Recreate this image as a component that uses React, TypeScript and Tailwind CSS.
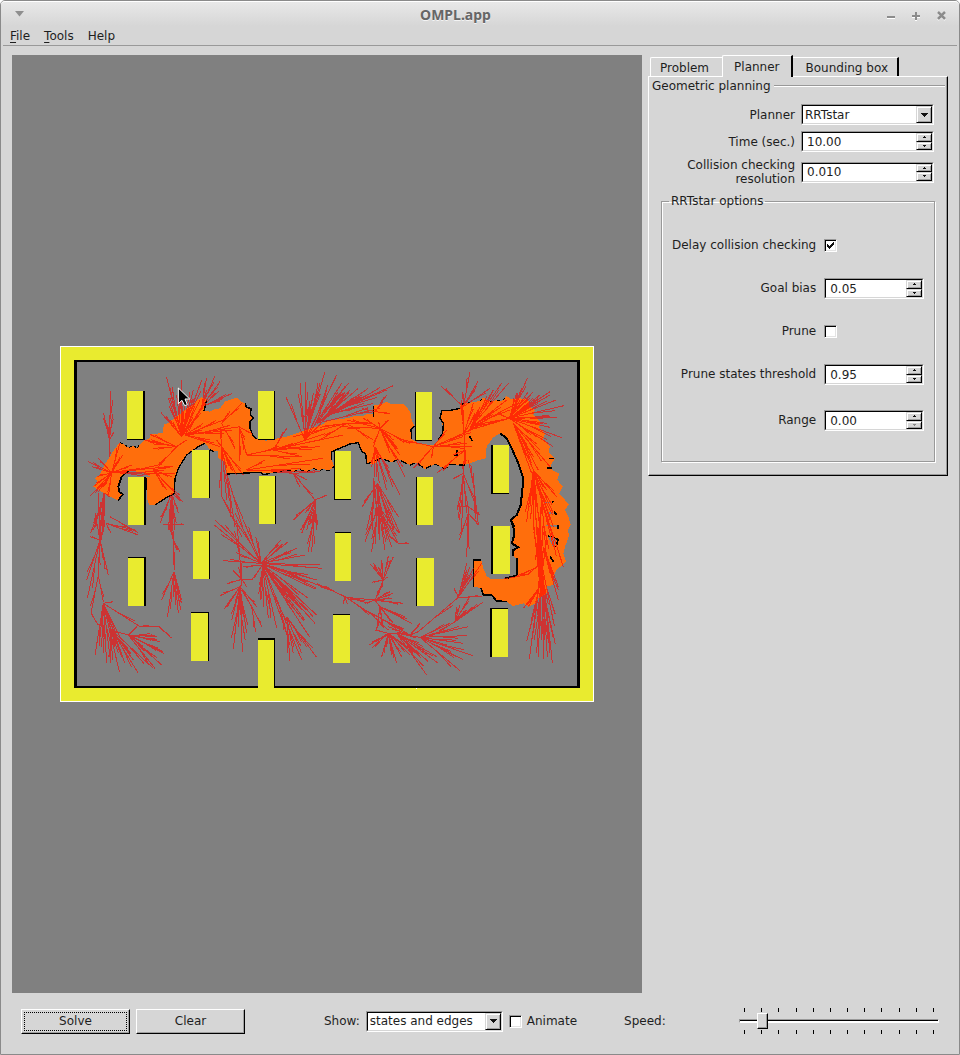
import React, { useId, useState } from "react";

type Fan = number[];

/* Search tree branches: origin followed by the tips that grow from it. */
const upperLeft: Fan[] = [
  [148, 300, 152, 153, 131, 220, 158, 222, 163, 275, 140, 250, 148, 350],
  [155, 398, 85, 365, 115, 355, 95, 380, 180, 308, 215, 375, 172, 365, 240, 385, 340, 378, 110, 410, 92, 467, 115, 455, 130, 440, 145, 470, 345, 400, 100, 440, 188, 345, 270, 403],
  [135, 460, 100, 570, 118, 575, 130, 575, 92, 580, 125, 600, 110, 540, 150, 470],
  [365, 290, 320, 112, 365, 120, 390, 155, 330, 145, 303, 218, 325, 175, 330, 240, 345, 200, 400, 150, 412, 155, 425, 120, 375, 180, 350, 165, 420, 180, 390, 210, 400, 230, 430, 200],
  [350, 320, 270, 283, 265, 305, 255, 300, 380, 300, 290, 385, 280, 325],
  [375, 285, 425, 270, 490, 240, 515, 270, 540, 260, 430, 250, 480, 320, 450, 300],
  [425, 200, 465, 107, 440, 113, 480, 125, 478, 152, 440, 150, 517, 160, 490, 175, 375, 285],
  [485, 250, 545, 190, 510, 215, 500, 225, 525, 325],
  [538, 262, 560, 345, 538, 362, 580, 282, 555, 300],
  [560, 345, 780, 300, 680, 320, 720, 350, 850, 285],
  [640, 330, 780, 320, 725, 350, 700, 310, 680, 265],
  [485, 320, 480, 260, 470, 300, 485, 470, 500, 480, 530, 405, 550, 405, 515, 390, 500, 400],
  [280, 390, 320, 450, 370, 487, 335, 410, 300, 410, 340, 378],
  [335, 460, 300, 550, 325, 570, 335, 570, 345, 570, 330, 540, 355, 520, 368, 485, 310, 520],
  [735, 300, 678, 172, 720, 130, 735, 125, 727, 200, 770, 155, 795, 95, 755, 180, 830, 105, 845, 130, 800, 200, 740, 180, 760, 160, 780, 130, 850, 180],
  [770, 250, 865, 130, 895, 145, 925, 145, 960, 205, 900, 170, 855, 140, 800, 150],
  [800, 225, 855, 140, 870, 150, 840, 160, 905, 165, 930, 160, 940, 190, 890, 200, 1000, 137, 980, 150],
  [560, 390, 615, 360, 680, 395, 788, 355, 760, 395],
  [700, 400, 640, 395, 780, 395, 720, 420, 765, 480, 680, 395, 740, 420, 720, 440],
  [765, 480, 700, 540, 740, 570, 755, 570, 770, 570, 800, 465, 735, 520, 725, 580],
  [500, 400, 515, 500, 550, 570, 525, 560],
  [485, 470, 515, 520, 545, 590],
];

const upperRight: Fan[] = [
  [180, 265, 80, 240, 60, 260, 175, 245, 220, 300, 270, 310, 210, 340, 230, 320, 240, 345, 160, 320, 205, 240, 130, 235, 255, 410],
  [80, 250, 0, 262, -80, 290, 0, 300, 160, 250, 160, 300],
  [165, 320, 155, 380, 157, 570, 178, 430, 200, 450, 240, 465, 210, 400, 190, 400],
  [172, 430, 170, 560, 180, 570, 127, 500, 140, 570, 235, 530, 190, 570, 220, 570, 205, 540, 240, 580],
  [165, 215, 120, 220, 200, 165, 210, 220, 125, 205, 190, 185],
  [340, 320, 380, 270, 430, 290, 455, 320, 440, 310, 475, 260, 230, 295, 335, 355, 280, 385],
  [430, 200, 362, 137, 420, 190, 428, 155, 450, 97, 475, 122, 465, 150, 510, 145, 440, 180],
  [432, 280, 425, 195, 430, 240, 460, 190, 475, 210, 500, 240, 425, 180],
  [435, 330, 432, 280, 437, 372, 400, 345, 350, 400, 430, 400],
  [430, 400, 398, 418, 420, 480, 415, 535, 440, 520, 425, 570, 465, 490],
  [463, 450, 445, 360, 465, 520, 475, 555, 460, 400],
  [445, 500, 415, 500, 480, 525, 443, 570],
  [450, 265, 480, 200, 520, 150, 530, 210, 545, 130, 590, 190, 565, 130, 560, 180],
  [568, 235, 622, 115, 605, 145, 640, 155, 660, 165, 690, 155, 708, 180, 732, 197, 712, 232, 690, 230, 655, 190, 625, 155, 590, 160, 530, 220, 490, 250, 450, 270, 690, 262, 725, 293, 700, 320, 680, 250, 690, 165, 655, 175, 600, 180, 650, 290],
  [580, 250, 640, 390, 625, 330, 640, 350, 660, 330, 690, 380, 610, 330, 655, 390, 635, 400],
  [640, 390, 640, 570, 650, 570, 620, 545, 630, 500, 690, 540, 700, 520, 660, 460, 700, 560, 680, 450, 710, 470, 660, 570, 670, 500],
];

const lowerLeft: Fan[] = [
  [120, 60, 90, 50, 105, -20, 115, -80, 130, -80, 135, 0, 115, 150, 80, 180, 82, 235, 145, 165, 130, 120],
  [115, 165, 93, 280, 130, 245, 115, 110],
  [105, 300, 93, 280, 115, 315],
  [130, 250, 160, 245, 105, 405, 120, 350, 125, 380, 140, 430, 150, 410, 178, 455, 160, 330, 175, 400, 240, 320, 180, 350, 195, 430, 145, 280],
  [155, 330, 165, 380, 185, 410, 235, 460, 210, 400, 150, 430, 220, 420, 280, 445],
  [297, 320, 240, 318, 335, 355],
  [205, 345, 230, 320, 285, 345, 290, 360, 300, 365, 310, 395, 305, 435, 285, 445, 150, 330, 250, 380, 290, 350, 265, 400, 312, 400],
  [138, 10, 152, 38, 235, 45, 175, 20, 225, 30],
  [150, -10, 235, 38],
  [340, 60, 335, -80, 330, 0, 345, 150, 350, 90, 360, 95, 325, 5],
  [340, 14, 310, 15, 372, 13],
  [342, 155, 305, 240, 322, 292, 355, 278, 362, 270, 365, 240, 340, 230],
  [603, 130, 490, 122, 527, 97, 465, 0, 463, 15, 550, 0, 525, -20, 587, 50, 595, 70, 662, 60, 685, 65, 710, 85, 735, 105, 780, 135, 785, 145, 808, 208, 765, 207, 740, 170],
  [608, 135, 745, 235, 765, 310, 770, 285, 735, 300, 720, 290, 748, 350, 725, 420, 680, 340, 650, 325, 625, 295, 610, 260, 575, 180, 600, 210, 548, 140, 600, 240, 740, 270, 760, 290, 700, 90, 715, 250, 770, 180],
  [680, 290, 690, 422, 770, 412, 740, 380, 725, 400, 670, 330, 700, 400],
  [545, 178, 500, 192, 520, 152, 535, 140, 575, 180, 542, 120, 530, 0, 542, 210, 560, 200],
  [540, 200, 480, 227, 492, 268, 515, 300, 525, 245, 520, 388, 547, 395, 535, 320, 560, 340, 545, 280, 590, 260, 500, 262, 550, 290],
  [575, 260, 545, 210, 605, 320, 587, 335],
  [765, -30, 745, 95, 755, 95, 722, 30, 768, 10, 735, 10],
];

const lowerRight: Fan[] = [
  [175, -40, 135, 65, 155, 95, 158, 80, 195, 90, 215, 80, 235, 70, 180, 60, 210, 50, 238, 40],
  [235, 70, 210, 50, 267, 70],
  [445, -20, 418, 60, 440, 110, 447, 60, 475, 15],
  [190, 180, 205, 108, 220, 110, 152, 133, 160, 128, 175, 140, 155, 187, 183, 120, 205, 170, 170, 230],
  [165, 240, 190, 185, 210, 215, 218, 220, 215, 235, 250, 250, 135, 250, 180, 210, 75, 232, 200, 245],
  [75, 230, 70, 252, 82, 252, 0, 195, -10, 190, 165, 290, 145, 250],
  [180, 260, 190, 320, 170, 330, 255, 290, 275, 310, 220, 310, 165, 240, 185, 290, 210, 300],
  [145, 275, 205, 330, 270, 345, 250, 330],
  [205, 340, 148, 375, 155, 385, 168, 365, 185, 410, 200, 380, 215, 405, 230, 430, 245, 410, 270, 405, 280, 400, 165, 330, 250, 340, 300, 408, 225, 370],
  [230, 340, 295, 405, 320, 465, 325, 425, 355, 430, 350, 410, 310, 380, 300, 352],
  [270, 345, 300, 310, 205, 320, 240, 340],
  [300, 352, 400, 325, 445, 320, 440, 347, 430, 370, 428, 418, 458, 407, 420, 452, 400, 405, 350, 340, 390, 310, 380, 375, 410, 410],
  [295, 335, 415, 232, 270, 345],
  [415, 232, 440, 130, 450, 140, 485, 130, 403, 205, 430, 170, 487, 230, 460, 145, 445, 165],
  [405, 305, 450, 228, 488, 247, 460, 260, 420, 255, 350, 340, 440, 270, 410, 260],
  [660, 200, 640, 0, 650, 0, 660, 0, 670, 0, 645, -60, 655, 40, 665, 60, 680, 60, 625, 260, 610, 265],
  [665, -60, 690, 20, 700, 80, 730, 140, 680, 120, 655, 160, 650, 100],
  [670, 80, 715, 200, 715, 240, 700, 170, 690, 160, 660, 220],
  [645, 145, 625, 163, 590, 168, 660, 130],
  [590, 170, 553, 176, 625, 163],
  [665, 130, 628, 418, 650, 400, 655, 412, 672, 418, 682, 410, 697, 428, 690, 370, 703, 318, 640, 340, 675, 360, 660, 320, 690, 400, 670, 260, 680, 280],
];

/* Each branch carries a short twig that splits off beyond its middle. */
function branches(fans: Fan[]): string {
  const parts: string[] = [];
  for (const [ox, oy, ...tips] of fans) {
    for (let i = 0; i < tips.length; i += 2) {
      const dx = tips[i] - ox;
      const dy = tips[i + 1] - oy;
      const side = i % 4 === 0 ? 1 : -1;
      parts.push(`M${ox} ${oy}l${dx} ${dy}`);
      parts.push(
        `M${ox + dx * 0.4} ${oy + dy * 0.4}l${dx * 0.42 - dy * 0.05 * side} ${dy * 0.42 + dx * 0.05 * side}`
      );
    }
  }
  return parts.join("");
}

const region =
  "M100 440L112 425 106 415 120 403 135 372 150 350 165 325 180 308 195 315 205 322 222 318 232 325 240 312 255 300 268 297 272 283 300 280 308 278 312 252 325 250 345 232 360 222 375 210 400 195 412 180 425 172 440 180 432 213 450 215 462 208 480 205 495 185 510 180 530 173 540 183 555 190 560 203 573 205 572 225 580 233 570 245 570 265 578 285 590 298 620 302 680 290 735 272 780 257 800 245 820 240 860 235 890 227 905 229 920 223 940 222 940 197 965 192 980 186 995 192 1030 192 1040 200 1052 220 1055 240 1063 258 1053 268 1055 298 1080 312 1120 315 1135 300 1145 280 1148 255 1140 235 1145 212 1165 212 1200 205 1202 193 1230 188 1260 183 1270 173 1290 185 1310 180 1325 184 1340 168 1355 178 1380 175 1405 180 1408 200 1425 210 1420 225 1440 244 1438 262 1455 280 1449 298 1470 318 1466 335 1485 355 1472 375 1478 392 1498 400 1492 420 1508 440 1498 460 1515 480 1527 493 1515 510 1525 530 1532 555 1523 570 1528 585 1515 620 1510 640 1518 665 1490 690 1480 710 1480 735 1460 740 1460 760 1435 775 1425 790 1405 800 1390 790 1358 798 1340 785 1310 783 1295 765 1270 765 1263 745 1242 740 1240 660 1263 658 1270 685 1280 708 1295 718 1335 716 1370 708 1370 655 1358 648 1360 630 1375 622 1355 610 1363 585 1360 560 1353 540 1370 525 1382 495 1385 450 1390 415 1375 370 1355 325 1340 295 1320 280 1300 292 1280 320 1277 355 1250 362 1225 372 1210 376 1170 373 1155 387 1125 372 1095 387 1070 368 1050 375 1035 367 1015 358 995 367 965 355 940 372 920 372 917 340 905 335 895 308 870 312 840 325 815 335 815 360 822 380 805 393 790 386 780 392 760 385 740 395 715 388 700 395 680 390 640 398 620 400 600 397 500 402 495 365 475 355 475 335 450 330 436 310 415 320 380 345 355 385 345 415 343 460 320 472 285 495 268 495 262 480 258 410 270 410 250 397 205 392 185 410 175 440 178 455 188 463 175 482 155 472 130 458Z";

const outlines: [string, number, string?][] = [
  ["M205 392L185 410 175 440 178 455 188 463 175 482", 5],
  ["M436 310L415 320 380 345 355 385 345 415 343 460 320 472 285 495", 4],
  ["M440 180L432 213M450 330L462 335M258 415V450M500 402L600 397 612 404 630 400", 4],
  ["M180 308L195 315 205 322 222 318 232 325 240 312", 3, "9 6"],
  ["M555 190L560 203 573 205 572 225 580 233 570 245 570 265 578 285 590 298", 4],
  ["M640 398L680 390 700 395 715 388 740 395 760 385 780 392 790 386 805 393 822 380", 3, "12 9"],
  ["M815 360L815 335 870 312 895 308 905 335 917 340 920 372", 4],
  ["M920 372L965 355 995 367 1015 358 1050 375 1070 368 1095 387 1125 372 1155 387 1170 373 1225 376", 4, "18 10"],
  ["M1063 258L1053 268 1055 298M940 197V230M1200 205L1165 212 1145 212 1140 235 1150 250 1148 280 1135 300", 4],
  ["M1202 193L1230 188M1260 183L1270 173M1290 185L1310 180 1325 184 1340 168", 3, "9 12"],
  ["M1228 287L1237 303M1190 330V345L1182 345", 5],
  ["M1320 280L1340 295 1355 325 1375 370 1390 415 1387 450 1382 495 1370 525 1353 540 1363 560", 6],
  ["M1353 540L1360 560 1363 585 1355 610 1375 622 1360 630 1358 648M1371 655V707L1335 715", 6],
  ["M1263 659H1240V740M1263 745L1270 765 1295 765 1310 783 1340 785", 5],
  ["M1466 355H1482M1460 383L1475 383M1476 485L1480 487M1482 515L1490 525M1494 555V568M1464 588L1494 598 1488 622M1470 650L1480 665", 5],
];

type Box = [number, number, number, number, number, number, number, number];
/* x, y, width, height, then shadow thickness: left, top, right, bottom */
const pillars: Box[] = [
  [201, 153, 48, 144, 0, 0, 6, 3],
  [594, 153, 48, 144, 0, 0, 3, 3],
  [396, 330, 51, 144, 0, 0, 3, 0],
  [204, 411, 48, 144, 0, 0, 6, 0],
  [597, 408, 48, 144, 0, 0, 3, 0],
  [1068, 156, 48, 144, 3, 0, 0, 3],
  [825, 333, 48, 144, 3, 0, 0, 3],
  [1071, 411, 48, 144, 3, 0, 0, 0],
  [1299, 315, 48, 144, 6, 0, 0, 3],
  [204, 654, 48, 144, 0, 3, 6, 0],
  [399, 573, 48, 144, 0, 0, 3, 0],
  [393, 819, 51, 144, 0, 3, 3, 0],
  [594, 900, 48, 150, 0, 6, 3, -12],
  [825, 579, 48, 144, 0, 3, 0, 0],
  [1071, 654, 51, 144, 3, 0, 0, 0],
  [819, 825, 51, 144, 0, 3, 0, 0],
  [1299, 558, 51, 144, 6, 0, 0, 0],
  [1296, 807, 48, 144, 6, 3, 0, 0],
];

function Tree({ color }: { color: string }) {
  return (
    <g fill="none" stroke={color} strokeWidth={3}>
      <path d={branches(upperLeft)} />
      <path d={branches(upperRight)} transform="translate(780 0)" />
      <path d={branches(lowerLeft)} transform="translate(0 540)" />
      <path d={branches(lowerRight)} transform="translate(780 540)" />
    </g>
  );
}

function Scene() {
  return (
    <svg
      viewBox="0 18 1602 1068"
      className="block h-auto w-[534px] max-w-full"
      shapeRendering="crispEdges"
      role="img"
      aria-label="Planner workspace"
    >
      <defs>
        <clipPath id="explored">
          <path d={region} />
        </clipPath>
      </defs>
      <rect x="0" y="18" width="1602" height="1068" fill="#fff" />
      <rect x="3" y="21" width="1596" height="1062" fill="#e9eb2f" />
      <rect x="42" y="60" width="1518" height="984" fill="#000" />
      <rect x="51" y="66" width="1500" height="972" fill="#808080" />
      <Tree color="#cc3333" />
      <path d={region} fill="#ff6e0c" />
      {outlines.map(([d, w, dash]) => (
        <path key={d} d={d} fill="none" stroke="#000" strokeWidth={w} strokeDasharray={dash} />
      ))}
      <g fill="#808080">
        <path d="M1452 485h22v4h-22zM1464 515h16v8h-16zM1454 555h38v5l-14 2zM1464 590l24 8v14l-10 6z" />
      </g>
      <g clipPath="url(#explored)">
        <Tree color="#ff2a05" />
      </g>
      {pillars.map(([x, y, w, h, l, t, r, b]) => (
        <g key={`${x}-${y}`}>
          <rect x={x - l} y={y - t} width={w + l + r} height={h + t + b} fill="#000" />
          <rect x={x} y={y} width={w} height={h} fill="#e9eb2f" />
        </g>
      ))}
      <rect x="1068" y="1044" width="4" height="3" fill="#fff" />
      <path
        d="M355 144V191L366 181 374 197 382 194 375 177 389 177Z"
        fill="#000"
        stroke="#fff"
        strokeWidth="3"
        shapeRendering="auto"
      />
    </svg>
  );
}

const sunken =
  "flex h-[21px] border border-t-[#999] border-l-[#999] border-r-white border-b-white bg-white";
const sunkenInner =
  "flex min-w-0 flex-1 border border-t-black border-l-black border-r-[#d6d6d6] border-b-[#d6d6d6]";
const raisedEdge = "border border-r-black border-b-black bg-[#d6d6d6]";
const raised = `${raisedEdge} border-t-[#d6d6d6] border-l-[#d6d6d6] shadow-[inset_1px_1px_0_#fff,inset_-1px_-1px_0_#a0a0a0]`;
const pushButton = `${raisedEdge} h-[25px] w-[109px] border-t-white border-l-white shadow-[inset_-1px_-1px_0_#a0a0a0]`;

function Combo({ id, options, className }: { id: string; options: string[]; className: string }) {
  return (
    <div className={`${sunken} ${className}`}>
      <div className={`${sunkenInner} relative`}>
        <select id={id} className="w-full appearance-none bg-white pl-[2px] pr-4 outline-none">
          {options.map((o) => (
            <option key={o}>{o}</option>
          ))}
        </select>
        <span
          className={`pointer-events-none absolute inset-y-0 right-0 flex w-4 items-center justify-center ${raised}`}
        >
          <svg viewBox="0 0 8 4" className="h-1 w-2" shapeRendering="crispEdges" aria-hidden="true">
            <path d="M0 0h8L4 4z" fill="#111" />
          </svg>
        </span>
      </div>
    </div>
  );
}

function Spin({ id, initial, step, className, atMin }: { id: string; initial: string; step: number; className: string; atMin?: boolean }) {
  const [value, setValue] = useState(initial);
  const digits = initial.split(".")[1].length;
  const bump = (d: number) => setValue((v) => Math.max(0, Number(v) + d).toFixed(digits));
  return (
    <div className={`${sunken} ${className}`}>
      <div className={sunkenInner}>
        <input
          id={id}
          type="text"
          inputMode="decimal"
          value={value}
          onChange={(e) => setValue(e.target.value)}
          className="min-w-0 flex-1 bg-white pl-1 outline-none"
        />
        <div className="flex w-4 flex-col">
          <button type="button" aria-label="Increase" onClick={() => bump(step)} className={`flex min-h-0 flex-1 items-center justify-center ${raised}`}>
            <svg viewBox="0 0 3 2" className="h-[2px] w-[3px]" shapeRendering="crispEdges" aria-hidden="true">
              <path d="M1 0h1v1h1v1H0V1h1z" fill="#111" />
            </svg>
          </button>
          <button type="button" aria-label="Decrease" onClick={() => bump(-step)} className={`flex min-h-0 flex-1 items-center justify-center ${raised}`}>
            <svg viewBox="0 0 3 2" className="h-[2px] w-[3px]" shapeRendering="crispEdges" aria-hidden="true">
              <path d="M0 0h3v1H2v1H1V1H0z" fill={atMin ? "#888" : "#111"} />
            </svg>
          </button>
        </div>
      </div>
    </div>
  );
}

function Check({ id, initial = false }: { id: string; initial?: boolean }) {
  const [on, setOn] = useState(initial);
  return (
    <span className="relative block size-[13px] shrink-0">
      <input
        id={id}
        type="checkbox"
        checked={on}
        onChange={() => setOn(!on)}
        className="block size-full appearance-none border border-t-[#999] border-l-[#999] border-r-white border-b-white bg-white shadow-[inset_1px_1px_0_#000,inset_-1px_-1px_0_#e4e4e4]"
      />
      {on && (
        <svg viewBox="0 0 13 13" className="pointer-events-none absolute inset-0 size-full" aria-hidden="true" shapeRendering="crispEdges">
          <path d="M3 5h1v1h1v1h1V6h1V5h1V4h1V3h1v3H9v1H8v1H7v1H6v1H5V9H4V8H3z" fill="#111" />
        </svg>
      )}
    </span>
  );
}

function Row({ label, children, className = "" }: { label: string; className?: string; children: (id: string) => React.ReactNode }) {
  const id = useId();
  return (
    <div className={`flex justify-end gap-2 ${className}`}>
      <label htmlFor={id} className="leading-[21px] whitespace-nowrap">{label}</label>
      <div className="flex min-h-[21px] w-[100px] shrink-0 items-center">{children(id)}</div>
    </div>
  );
}

const tab = "border-t border-l border-white rounded-tl-[2px]";

export default function App() {
  const [speed, setSpeed] = useState(1);
  return (
    <div className="flex min-h-screen flex-col rounded-t-[5px] border border-[#8a8a8a] bg-[#d6d6d6] font-['DejaVu_Sans',sans-serif] text-[12px] leading-[14px] text-[#1e1e1e]">
      <header className="flex h-[25px] items-center rounded-t-[4px] border-t border-white bg-linear-to-b from-[#e8e8e8] to-[#d6d6d6] px-3">
        <button type="button" aria-label="Window menu" className="flex w-3 justify-center">
          <svg viewBox="0 0 9 6" className="h-[6px] w-[9px]" aria-hidden="true">
            <path d="M0 0h9L4.500 5.500z" fill="#8f8f8f" />
          </svg>
        </button>
        <h1 className="flex-1 pt-[2px] text-center font-['Noto_Sans',sans-serif] text-[14px] font-bold text-[#666] [text-shadow:0_1px_0_#f4f4f4]">OMPL.app</h1>
        <div className="flex gap-[14px] pt-[2px] text-[#8c8c8c]">
          <button type="button" aria-label="Minimize">
            <svg viewBox="0 0 11 11" className="size-[11px]" shapeRendering="crispEdges" aria-hidden="true">
              <path d="M1 6h8v2H1z" fill="currentColor" />
              <path d="M1 8h8v1H1z" fill="#fff" />
            </svg>
          </button>
          <button type="button" aria-label="Maximize">
            <svg viewBox="0 0 11 11" className="size-[11px]" shapeRendering="crispEdges" aria-hidden="true">
              <path d="M1 7h8v1H1zM4 10h2v1H4z" fill="#fff" />
              <path d="M4 2h2v3h3v2H6v3H4V7H1V5h3z" fill="currentColor" />
            </svg>
          </button>
          <button type="button" aria-label="Close">
            <svg viewBox="0 0 11 11" className="size-[11px]" aria-hidden="true">
              <path d="M2 3l7 7M9 3l-7 7" stroke="#fff" strokeWidth="2" />
              <path d="M2 2l7 7M9 2l-7 7" stroke="currentColor" strokeWidth="2.500" />
            </svg>
          </button>
        </div>
      </header>
      <nav className="mx-[2px] flex gap-[14px] border-b border-[#999] px-[7px] pt-[3px] pb-[2px]">
        <button type="button"><span className="underline underline-offset-2">F</span>ile</button>
        <button type="button"><span className="underline underline-offset-2">T</span>ools</button>
        <button type="button">Help</button>
      </nav>

      <main className="flex flex-1 gap-[6px] px-[11px] pt-[9px]">
        <section className="flex min-w-0 flex-1 items-center justify-center bg-[#808080]">
          <Scene />
        </section>

        <aside className="w-[300px] shrink-0">
          <div role="tablist" className="flex items-end pl-[2px]">
            <button type="button" role="tab" aria-selected="false" className={`h-[19px] pt-[2px] pr-[13px] pl-[9px] ${tab}`}>Problem</button>
            <button type="button" role="tab" aria-selected="true" className={`relative -mb-px h-[22px] border-r-2 border-r-black bg-[#d6d6d6] px-[11px] ${tab}`}>Planner</button>
            <button type="button" role="tab" aria-selected="false" className="h-[19px] border-t border-r-2 border-t-white border-r-black pt-[2px] pr-[9px] pl-[13px]">Bounding box</button>
          </div>
          <div role="tabpanel" className="border border-t-white border-r-black border-b-black border-l-white pr-[2px] pb-[13px] shadow-[inset_-1px_-1px_0_#999]">
            <div className="flex items-center gap-[3px] pl-[3px]">
              <h2 className="leading-[18px]">Geometric planning</h2>
              <div className="h-[2px] flex-1 border-t border-b border-t-[#999] border-b-white" />
            </div>
            <div className="grid grid-cols-[1fr_133px] items-center gap-x-[6px] gap-y-[6px] pt-[9px] pr-[11px] text-right">
              <label htmlFor="planner">Planner</label>
              <Combo id="planner" options={["RRTstar", "RRTConnect", "PRM"]} className="w-full" />
              <label htmlFor="time">Time (sec.)</label>
              <Spin id="time" initial="10.00" step={1} className="w-full" />
              <label htmlFor="resolution">Collision checking<br />resolution</label>
              <Spin id="resolution" initial="0.010" step={0.001} className="w-full" />
            </div>
            <fieldset className="mt-2 mr-[11px] ml-[12px] border border-[#999] px-[10px] pb-[30px] shadow-[1px_1px_0_#fff,inset_1px_1px_0_#fff]">
              <legend className="-ml-[3px] px-[2px]">RRTstar options</legend>
              <div className="flex flex-col gap-[22px] pt-[27px]">
                <Row label="Delay collision checking">{(id) => <Check id={id} initial />}</Row>
                <Row label="Goal bias">{(id) => <Spin id={id} initial="0.05" step={0.05} className="w-full" />}</Row>
                <Row label="Prune">{(id) => <Check id={id} />}</Row>
                <Row label="Prune states threshold">{(id) => <Spin id={id} initial="0.95" step={0.05} className="w-full" />}</Row>
                <Row label="Range" className="h-6 items-end">{(id) => <Spin id={id} initial="0.00" step={1} atMin className="w-full" />}</Row>
              </div>
            </fieldset>
          </div>
        </aside>
      </main>

      <footer className="flex items-center pt-[15px] pr-5 pb-5 pl-5">
        <button type="button" className={`p-[2px] ${pushButton}`}>
          <span className="flex h-full items-center justify-center border border-dotted border-black">Solve</span>
        </button>
        <button type="button" className={`ml-[6px] ${pushButton}`}>Clear</button>
        <label htmlFor="show" className="ml-[79px]">Show:</label>
        <Combo id="show" options={["states and edges", "states", "edges"]} className="ml-[6px] w-[137px]" />
        <span className="ml-[6px] flex items-center gap-[5px]">
          <Check id="animate" />
          <label htmlFor="animate">Animate</label>
        </span>
        <label htmlFor="speed" className="ml-[47px]">Speed:</label>
        <div className="ml-auto w-[200px]">
          <div className="flex justify-between px-[5px]" aria-hidden="true">
            {Array.from({ length: 12 }, (_, i) => <span key={i} className="h-1 w-px bg-black" />)}
          </div>
          <input
            id="speed"
            type="range"
            min={0}
            max={11}
            value={speed}
            onChange={(e) => setSpeed(Number(e.target.value))}
            className="my-px block h-4 w-full appearance-none bg-transparent [&::-webkit-slider-runnable-track]:h-1 [&::-webkit-slider-runnable-track]:border [&::-webkit-slider-runnable-track]:border-t-[#999] [&::-webkit-slider-runnable-track]:border-l-[#999] [&::-webkit-slider-runnable-track]:border-r-white [&::-webkit-slider-runnable-track]:border-b-white [&::-webkit-slider-runnable-track]:bg-linear-to-b [&::-webkit-slider-runnable-track]:from-black [&::-webkit-slider-runnable-track]:from-50% [&::-webkit-slider-runnable-track]:to-white [&::-webkit-slider-runnable-track]:to-50% [&::-webkit-slider-thumb]:-mt-[7px] [&::-webkit-slider-thumb]:h-4 [&::-webkit-slider-thumb]:w-[11px] [&::-webkit-slider-thumb]:appearance-none [&::-webkit-slider-thumb]:border [&::-webkit-slider-thumb]:border-t-white [&::-webkit-slider-thumb]:border-l-white [&::-webkit-slider-thumb]:border-r-black [&::-webkit-slider-thumb]:border-b-black [&::-webkit-slider-thumb]:bg-[#d6d6d6] [&::-webkit-slider-thumb]:shadow-[inset_-1px_-1px_0_#999]"
          />
          <div className="flex justify-between px-[5px]" aria-hidden="true">
            {Array.from({ length: 12 }, (_, i) => <span key={i} className="h-1 w-px bg-black" />)}
          </div>
        </div>
      </footer>
    </div>
  );
}
